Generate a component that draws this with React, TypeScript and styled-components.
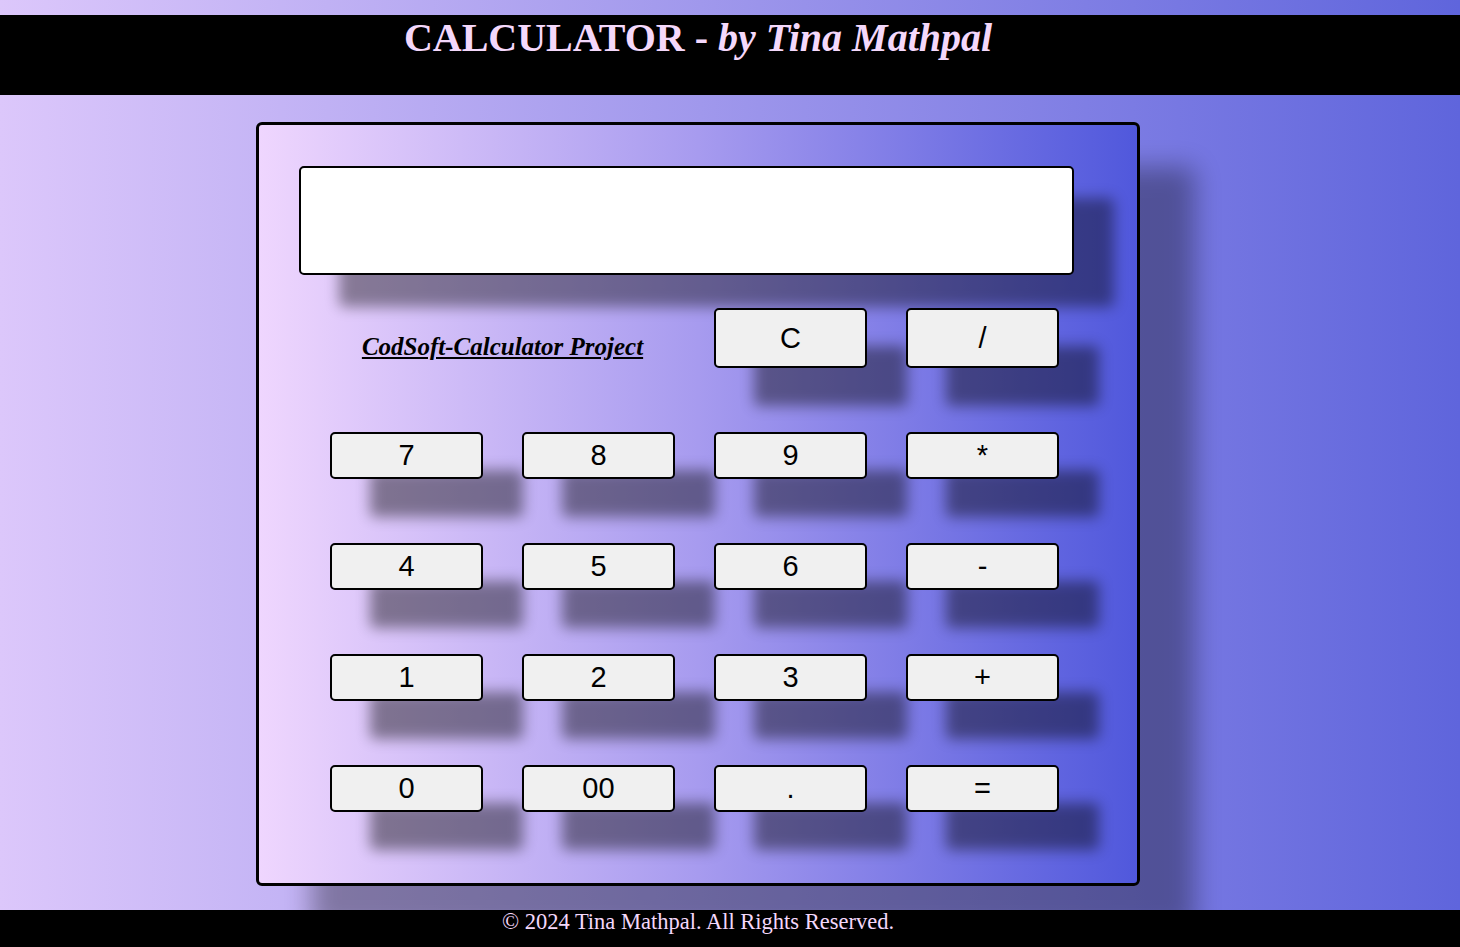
import styled, { createGlobalStyle } from 'styled-components'

const GlobalStyle = createGlobalStyle`
  html, body {
    margin: 0;
    padding: 0;
  }
  body {
    min-height: 100vh;
    background: linear-gradient(to right, #dcc7fb, #5f65dc);
    font-family: 'Liberation Serif', 'Times New Roman', serif;
  }
`

const Page = styled.div`
  padding-top: 15px;
  display: flex;
  flex-direction: column;
  min-height: 932px;
`

const Header = styled.header`
  background: #000;
  height: 80px;
  padding-right: 64px;
  text-align: center;
`

const Title = styled.h1`
  margin: 0;
  font-size: 40px;
  line-height: 46px;
  font-weight: bold;
  color: #f4d8fb;
  white-space: nowrap;

  em {
    font-style: italic;
  }
`

const Main = styled.main`
  flex: 1;
  display: flex;
  justify-content: center;
  padding: 27px 64px 23px 0;
`

const Calculator = styled.div`
  width: 878px;
  height: 717px;
  padding-top: 41px;
  border: 3px solid #000;
  border-radius: 6px;
  background: linear-gradient(to right, #efd6fe, #a79bef 50%, #5058dc);
  box-shadow: 55px 45px 26px rgba(0, 0, 0, 0.33);
`

const Display = styled.div`
  margin-left: 40px;
  width: 771px;
  height: 105px;
  background: #fff;
  border: 2px solid #000;
  border-radius: 5px;
  box-shadow: 40px 32px 14px rgba(0, 0, 0, 0.4);
`

const Keys = styled.div`
  margin: 33px 0 0 71px;
  display: grid;
  grid-template-columns: repeat(4, 153px);
  grid-template-rows: 60px repeat(4, 47px);
  column-gap: 39px;
  row-gap: 64px;
`

const ProjectLabel = styled.div`
  grid-column: 1 / span 2;
  display: flex;
  align-items: center;
  justify-content: center;
  padding-top: 18px;
  font-size: 25px;
  font-weight: bold;
  font-style: italic;
  text-decoration: underline;
  color: #000;
`

const Key = styled.button`
  box-sizing: border-box;
  width: 153px;
  height: 100%;
  background: #f0f0f0;
  border: 2px solid #000;
  border-radius: 5px;
  font-family: 'Liberation Sans', Arial, sans-serif;
  font-size: 29px;
  color: #000;
  padding: 0;
  box-shadow: 40px 38px 14px rgba(0, 0, 0, 0.42);
  cursor: pointer;
`

const Footer = styled.footer`
  background: #000;
  height: 37px;
  padding-right: 64px;
  text-align: center;
  color: #f4d8fb;
  font-size: 22.5px;
  line-height: 24px;
`

const rows = [
  ['7', '8', '9', '*'],
  ['4', '5', '6', '-'],
  ['1', '2', '3', '+'],
  ['0', '00', '.', '='],
]

export default function App() {
  return (
    <>
      <GlobalStyle />
      <Page>
        <Header>
          <Title>
            CALCULATOR - <em>by Tina Mathpal</em>
          </Title>
        </Header>
        <Main>
          <Calculator>
            <Display />
            <Keys>
              <ProjectLabel>CodSoft-Calculator Project</ProjectLabel>
              <Key>C</Key>
              <Key>/</Key>
              {rows.flat().map((k) => (
                <Key key={k}>{k}</Key>
              ))}
            </Keys>
          </Calculator>
        </Main>
        <Footer>© 2024 Tina Mathpal. All Rights Reserved.</Footer>
      </Page>
    </>
  )
}
